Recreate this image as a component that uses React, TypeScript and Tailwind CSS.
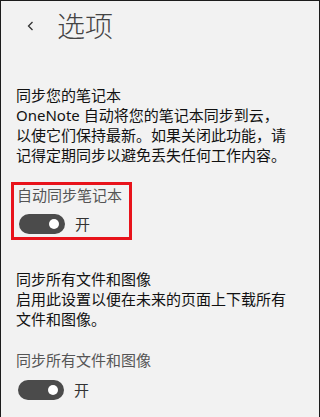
const font = "font-['Noto_Sans','Noto_Sans_CJK_SC',sans-serif]";

const Toggle = () => (
  <div className="flex items-center gap-[10px]">
    <div className="flex h-[20px] w-[46px] items-center justify-end rounded-full bg-[#4b4b4b] pr-[6px]">
      <div className="h-[10px] w-[10px] rounded-full bg-white" />
    </div>
    <span className="text-[15px] leading-[20px] text-[#333]">开</span>
  </div>
);

export default function App() {
  return (
    <div className={`h-[417px] w-[320px] overflow-hidden border-l border-r border-t border-[#1c1c1c] bg-[#f2f2f2] ${font}`}>
      {/* header */}
      <header className="flex h-[50px] items-center">
        <svg width="7" height="10" viewBox="0 0 7 10" className="ml-[26px]">
          <polyline points="5.5,1 1.5,5 5.5,9" fill="none" stroke="#333" strokeWidth="1.3" />
        </svg>
        <h1 className="ml-[23px] text-[28px] font-light leading-[36px] text-[#444]">选项</h1>
      </header>

      <section className="mt-[34px] pl-[15px] text-[15px] leading-[20px] text-[#111] whitespace-nowrap">
        <p>同步您的笔记本</p>
        <p>
          OneNote 自动将您的笔记本同步到云，
          <br />
          以使它们保持最新。如果关闭此功能，请
          <br />
          记得定期同步以避免丢失任何工作内容。
        </p>
      </section>

      <div className="ml-[10px] mt-[17px] w-[121px] border-[3px] border-[#e8131b] pb-[3px] pl-[3px]">
        <p className="text-[15px] leading-[20px] text-[#555]">自动同步笔记本</p>
        <div className="ml-[2px] mt-[9px]">
          <Toggle />
        </div>
      </div>

      <section className="mt-[29px] pl-[15px] text-[15px] leading-[20px] text-[#111] whitespace-nowrap">
        <p>同步所有文件和图像</p>
        <p>
          启用此设置以便在未来的页面上下载所有
          <br />
          文件和图像。
        </p>
      </section>

      <div className="mt-[21px] pl-[15px]">
        <p className="text-[15px] leading-[20px] text-[#555]">同步所有文件和图像</p>
        <div className="ml-[2px] mt-[10px]">
          <Toggle />
        </div>
      </div>
    </div>
  );
}
